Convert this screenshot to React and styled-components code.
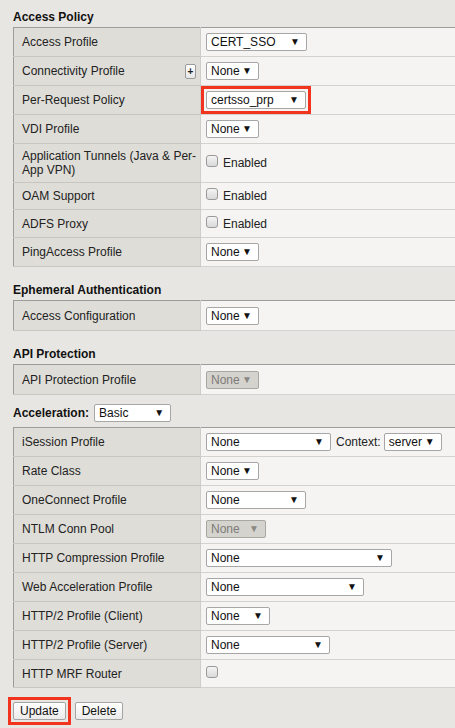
import React from 'react'
import styled, { createGlobalStyle } from 'styled-components'

const GlobalStyle = createGlobalStyle`
  html, body {
    margin: 0;
    padding: 0;
    background: #e8e6e2;
    overflow: hidden;
  }
  body {
    font-family: "Liberation Sans", Arial, sans-serif;
    font-size: 12px;
    color: #1e1e1e;
  }
`

const Page = styled.div`
  padding: 9px 0 0 13px;
  width: 480px;
`

const SectionTitle = styled.div`
  display: flex;
  align-items: center;
  gap: 5px;
  font-weight: bold;
  font-size: 12px;
  line-height: 16px;
  height: ${p => p.$h || 16}px;
  margin-top: ${p => p.$top || 0}px;
  margin-bottom: ${p => p.$bottom || 2}px;
  color: #111;
`

const FormTable = styled.table`
  border-collapse: collapse;
  width: 470px;
  border: 1px solid #9c9c9c;
`

const Row = styled.tr`
  height: ${p => p.$h || 29}px;
`

const LabelCell = styled.td`
  width: 177px;
  background: #dfddd8;
  padding: 0 1px 0 8px;
  border-bottom: 1px solid #c8c6c1;
  border-right: 1px solid #cfcdc9;
  line-height: 14px;
  vertical-align: middle;
  text-align: left;
  color: #222;
`

const LabelInner = styled.div`
  display: flex;
  align-items: center;
  justify-content: space-between;
`

const ValueCell = styled.td`
  background: #f5f4f2;
  padding: 0 5px;
  border-bottom: 1px solid #d4d2ce;
  vertical-align: middle;
`

const ValueInner = styled.div`
  display: flex;
  align-items: center;
  gap: 5px;
`

const SelectBox = styled.div`
  box-sizing: border-box;
  display: inline-flex;
  align-items: center;
  justify-content: space-between;
  width: ${p => p.$w}px;
  height: 18px;
  padding: 0 6px 0 4px;
  border: 1px solid ${p => (p.$disabled ? '#a9a7a2' : '#a6a6a6')};
  border-radius: 2px;
  background: ${p => (p.$disabled ? '#d5d3ce' : '#fff')};
  color: ${p => (p.$disabled ? '#7d7b77' : '#111')};
  font-size: 12px;
  font-weight: normal;
  line-height: 16px;
`

const Arrow = styled.span`
  font-size: 10px;
  line-height: 10px;
  color: ${p => (p.$disabled ? '#8a8884' : '#111')};
`

const Highlight = styled.div`
  display: inline-flex;
  align-items: center;
  margin-left: -5px;
  padding: 2px;
  border: 3px solid #f2341f;
`

const PlusButton = styled.div`
  box-sizing: border-box;
  width: 11px;
  height: 15px;
  margin-right: 3px;
  border: 1px solid #9a9a9a;
  border-radius: 2px;
  background: linear-gradient(#fff, #e6e6e6);
  font-size: 10px;
  font-weight: bold;
  line-height: 13px;
  text-align: center;
  color: #222;
`

const Check = styled.span`
  box-sizing: border-box;
  display: inline-block;
  width: 12px;
  height: 12px;
  border: 1px solid #9a9a9a;
  border-radius: 3px;
  background: linear-gradient(#f4f4f4, #d9d9d9);
  margin-top: -4px;
`

const CheckText = styled.span`
  color: #222;
`

const ContextLabel = styled.span`
  color: #222;
  margin-right: -2px;
`

const ButtonBar = styled.div`
  display: flex;
  align-items: center;
  gap: 4px;
  margin-top: 9px;
  margin-left: -5px;
`

const Outline = styled.div`
  display: inline-flex;
  padding: 2px;
  border: 3px solid #f2341f;
`

const Button = styled.div`
  box-sizing: border-box;
  height: 18px;
  padding: 0 6px;
  border: 1px solid #a4a4a4;
  border-radius: 2px;
  background: linear-gradient(#ffffff, #ebebeb);
  font-size: 12px;
  line-height: 16px;
  color: #111;
`

const Select = ({ value, w, disabled }) => (
  <SelectBox $w={w} $disabled={disabled}>
    <span>{value}</span>
    <Arrow $disabled={disabled}>▼</Arrow>
  </SelectBox>
)

const Enabled = () => (
  <ValueInner>
    <Check />
    <CheckText>Enabled</CheckText>
  </ValueInner>
)

const Field = ({ label, h, extra, children }) => (
  <Row $h={h}>
    <LabelCell>
      <LabelInner>
        <span>{label}</span>
        {extra}
      </LabelInner>
    </LabelCell>
    <ValueCell>
      <ValueInner>{children}</ValueInner>
    </ValueCell>
  </Row>
)

const App = () => (
  <Page>
    <GlobalStyle />
    <SectionTitle>Access Policy</SectionTitle>
    <FormTable>
      <tbody>
        <Field label="Access Profile"><Select value="CERT_SSO" w={101} /></Field>
        <Field label="Connectivity Profile" extra={<PlusButton>+</PlusButton>}>
          <Select value="None" w={53} />
        </Field>
        <Field label="Per-Request Policy">
          <Highlight><Select value="certsso_prp" w={100} /></Highlight>
        </Field>
        <Field label="VDI Profile"><Select value="None" w={53} /></Field>
        <Field label="Application Tunnels (Java & Per-App VPN)" h={39}><Enabled /></Field>
        <Field label="OAM Support" h={27}><Enabled /></Field>
        <Field label="ADFS Proxy" h={28}><Enabled /></Field>
        <Field label="PingAccess Profile"><Select value="None" w={53} /></Field>
      </tbody>
    </FormTable>

    <SectionTitle $top={15}>Ephemeral Authentication</SectionTitle>
    <FormTable>
      <tbody>
        <Field label="Access Configuration" h={30}><Select value="None" w={53} /></Field>
      </tbody>
    </FormTable>

    <SectionTitle $top={15}>API Protection</SectionTitle>
    <FormTable>
      <tbody>
        <Field label="API Protection Profile" h={30}><Select value="None" w={53} disabled /></Field>
      </tbody>
    </FormTable>

    <SectionTitle $top={8} $h={20} $bottom={4}>
      Acceleration:
      <Select value="Basic" w={77} />
    </SectionTitle>
    <FormTable>
      <tbody>
        <Field label="iSession Profile">
          <Select value="None" w={125} />
          <ContextLabel>Context:</ContextLabel>
          <Select value="server" w={58} />
        </Field>
        <Field label="Rate Class"><Select value="None" w={53} /></Field>
        <Field label="OneConnect Profile"><Select value="None" w={100} /></Field>
        <Field label="NTLM Conn Pool"><Select value="None" w={60} disabled /></Field>
        <Field label="HTTP Compression Profile"><Select value="None" w={186} /></Field>
        <Field label="Web Acceleration Profile"><Select value="None" w={158} /></Field>
        <Field label="HTTP/2 Profile (Client)"><Select value="None" w={64} /></Field>
        <Field label="HTTP/2 Profile (Server)"><Select value="None" w={124} /></Field>
        <Field label="HTTP MRF Router" h={28}><Check /></Field>
      </tbody>
    </FormTable>

    <ButtonBar>
      <Outline><Button>Update</Button></Outline>
      <Button>Delete</Button>
    </ButtonBar>
  </Page>
)

export default App
